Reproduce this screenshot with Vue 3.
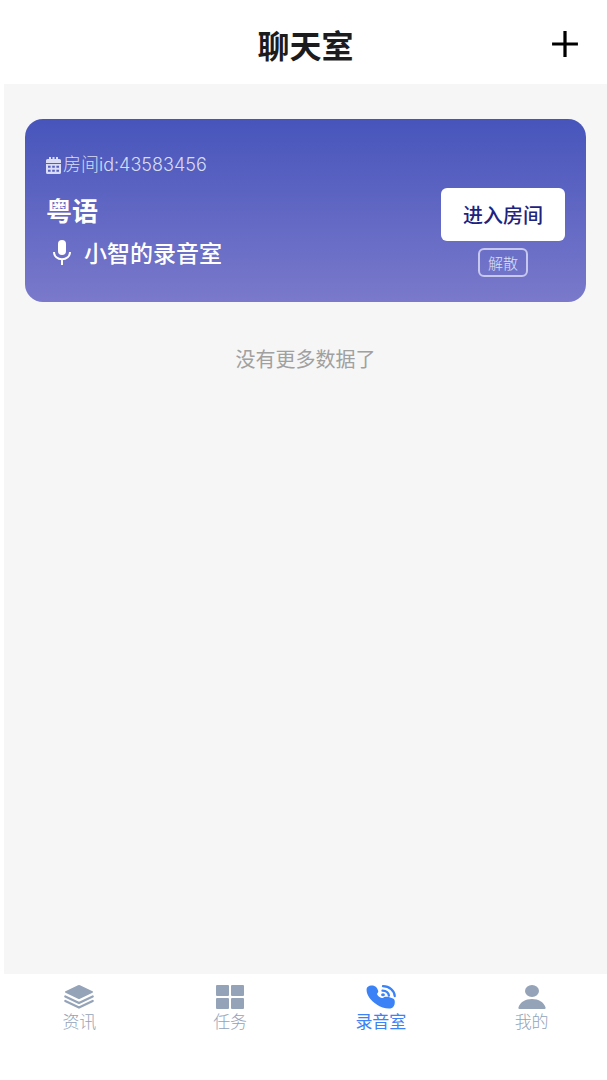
<template>
  <div class="chat-page">
    <header class="page-header">
      <h1>聊天室</h1>
      <button type="button" class="add-btn" aria-label="新建房间">
        <svg viewBox="0 0 26 26"><path d="M13 1v24M1 13h24" /></svg>
      </button>
    </header>

    <main class="room-list">
      <article v-for="room in rooms" :key="room.id" class="room-card">
        <div class="room-info">
          <div class="room-id">
            <svg class="calendar-icon" viewBox="0 0 15 17">
              <path fill-rule="evenodd" d="M3 0h2v2h1.500V0h2v2H10V0h2v2h1.500q1.500 0 1.500 1.500V6H0V3.500Q0 2 1.500 2H3zM0 7h15v8.500q0 1.500-1.500 1.500h-12Q0 17 0 15.500zM2 8.700v2h2.600v-2zM6.200 8.700v2h2.600v-2zM10.400 8.700v2H13v-2zM2 12.800v2h2.600v-2zM6.200 12.800v2h2.600v-2zM10.400 12.800v2H13v-2z" />
            </svg>
            <span>房间id:{{ room.id }}</span>
          </div>
          <h2>{{ room.language }}</h2>
          <div class="room-name">
            <svg class="mic-icon" viewBox="0 0 18 25">
              <rect x="5" y="0" width="8" height="15" rx="4" fill="currentColor" />
              <path d="M1 12c0 4.500 3.500 7.300 8 7.300s8-2.800 8-7.300M9 19v6" fill="none" stroke="currentColor" stroke-width="2" />
            </svg>
            <span>{{ room.name }}</span>
          </div>
        </div>
        <div class="room-actions">
          <button type="button" class="enter-btn">进入房间</button>
          <button type="button" class="dismiss-btn" @click="dismiss(room.id)">解散</button>
        </div>
      </article>
      <p class="no-more">没有更多数据了</p>
    </main>

    <nav class="tab-bar">
      <a
        v-for="tab in tabs"
        :key="tab.key"
        href="#"
        :class="['tab', { active: tab.key === activeTab }]"
        @click.prevent="activeTab = tab.key"
      >
        <svg v-if="tab.key === 'news'" viewBox="0 0 30 24">
          <path d="M14 .3q1-.5 2 0l12.500 6q1.200.7 0 1.400l-12.500 6q-1 .5-2 0l-12.500-6q-1.200-.7 0-1.400z" fill="currentColor" />
          <path d="M1.300 11.500L15 18l13.700-6.500M1.300 16L15 22.500 28.700 16" fill="none" stroke="currentColor" stroke-width="2.200" stroke-linecap="round" />
        </svg>
        <svg v-else-if="tab.key === 'task'" viewBox="0 0 30 24" fill="currentColor">
          <rect x="1" y="0" width="13" height="11" rx="1" />
          <rect x="16" y="0" width="13" height="11" rx="1" />
          <rect x="1" y="13" width="13" height="11" rx="1" />
          <rect x="16" y="13" width="13" height="11" rx="1" />
        </svg>
        <svg v-else-if="tab.key === 'record'" viewBox="0 0 30 24">
          <path d="M.7 3.500C1.200 1.600 3 .5 5 .4 7.500.3 9 .8 10.300 2.300c1.100 1.500 2.200 3.400 1.900 4.800-.3 1-1.500 1.400-1 2.400.8 1.800 2.800 3.200 4.600 3.600 1.300.2 2-1 3.500-1.300 2.200-.4 4.800.4 7 1.400 1.800.8 2.600 1.800 2.500 4 0 3-1.500 5.700-4.300 6.300-4 .6-10-1.300-13.800-4C4.700 15.600-.3 9 .7 3.500z" fill="currentColor" />
          <path d="M17 1.200c6.500.1 11.400 4.300 11.700 9.800M16.500 5.600c3.500.2 6 2.200 6.400 4.900" fill="none" stroke="currentColor" stroke-width="2.300" stroke-linecap="round" />
          <ellipse cx="17" cy="9.700" rx="1.900" ry="1.500" fill="currentColor" />
        </svg>
        <svg v-else viewBox="0 0 30 24" fill="currentColor">
          <ellipse cx="15" cy="6" rx="7" ry="6" />
          <path d="M2.500 24c-1.200 0-1.300-1-.9-2 1.800-5 6.600-8 13.400-8s11.600 3 13.400 8c.4 1 .3 2-.9 2z" />
        </svg>
        <span>{{ tab.label }}</span>
      </a>
    </nav>
  </div>
</template>

<script setup>
import { ref } from 'vue'

const rooms = ref([
  { id: '43583456', language: '粤语', name: '小智的录音室' },
])

const tabs = [
  { key: 'news', label: '资讯' },
  { key: 'task', label: '任务' },
  { key: 'record', label: '录音室' },
  { key: 'mine', label: '我的' },
]

const activeTab = ref('record')

function dismiss(id) {
  rooms.value = rooms.value.filter(r => r.id !== id)
}
</script>

<style>
body {
  background: #ffffff;
}
</style>

<style scoped>
.chat-page {
  display: flex;
  flex-direction: column;
  min-height: 100vh;
  margin-left: 4px;
  font-family: "Noto Sans CJK SC", sans-serif;
}

button {
  font-family: inherit;
  padding: 0;
  cursor: pointer;
}

.page-header {
  display: grid;
  grid-template-columns: 1fr auto 1fr;
  align-items: center;
  box-sizing: border-box;
  height: 84px;
  padding: 4px 28px 0;
}

.page-header h1 {
  grid-column: 2;
  margin: 0;
  font-size: 32px;
  line-height: 40px;
  font-weight: 700;
  color: #1c1c1e;
}

.add-btn {
  justify-self: end;
  width: 28px;
  height: 28px;
  border: none;
  background: none;
}

.add-btn svg {
  display: block;
  width: 28px;
  height: 28px;
  stroke: #000000;
  stroke-width: 3;
}

.room-list {
  flex: 1;
  padding: 35px 21px;
  background: #f6f6f6;
}

.room-card {
  display: flex;
  justify-content: space-between;
  padding: 32px 21px;
  border-radius: 18px;
  background: linear-gradient(180deg, #4755bb 0%, #7a79cb 100%);
  color: #ffffff;
}

.room-id {
  display: flex;
  align-items: center;
  gap: 2px;
  font-family: Inter, "Noto Sans CJK SC", sans-serif;
  font-size: 18px;
  line-height: 28px;
  font-weight: 300;
  color: #d9dcf4;
}

.calendar-icon {
  width: 15px;
  height: 17px;
  fill: currentColor;
}

.room-info h2 {
  margin: 11px 0 0;
  font-size: 26px;
  line-height: 40px;
  font-weight: 700;
}

.room-name {
  display: flex;
  align-items: center;
  gap: 13px;
  padding-left: 7px;
  margin-top: 4px;
  font-size: 23px;
  line-height: 36px;
  font-weight: 500;
}

.mic-icon {
  width: 18px;
  height: 25px;
}

.room-actions {
  display: flex;
  flex-direction: column;
  align-items: center;
  justify-content: flex-end;
  gap: 7px;
  margin-bottom: -7px;
}

.enter-btn {
  width: 124px;
  height: 53px;
  border: none;
  border-radius: 6px;
  background: #ffffff;
  color: #1d237f;
  font-size: 20px;
  font-weight: 500;
}

.dismiss-btn {
  width: 50px;
  height: 29px;
  border: 2px solid #c6c8ee;
  border-radius: 6px;
  background: none;
  color: #dfe0f6;
  font-size: 15px;
  line-height: 20px;
  font-weight: 300;
}

.no-more {
  margin: 43px 0 0;
  text-align: center;
  font-size: 20px;
  line-height: 28px;
  font-weight: 400;
  color: #a0a0a0;
}

.tab-bar {
  display: grid;
  grid-template-columns: repeat(4, 1fr);
  height: 106px;
}

.tab {
  display: flex;
  flex-direction: column;
  align-items: center;
  gap: 2px;
  padding-top: 11px;
  color: #94a3b8;
  font-size: 17px;
  line-height: 20px;
  font-weight: 300;
  text-decoration: none;
}

.tab svg {
  width: 30px;
  height: 24px;
}

.tab.active {
  color: #3b82f6;
  font-weight: 400;
}
</style>
